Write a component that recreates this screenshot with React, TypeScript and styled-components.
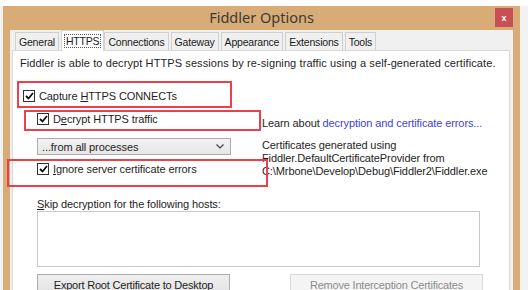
import React from 'react';
import styled, { createGlobalStyle, css } from 'styled-components';

const GlobalStyle = createGlobalStyle`
  html, body {
    margin: 0;
    padding: 0;
    background: #f2f2f2;
  }
  body {
    font-family: 'Liberation Sans', Arial, sans-serif;
  }
`;

const Page = styled.div`
  position: relative;
  width: 528px;
  height: 290px;
  overflow: hidden;
  background: #f2f2f2;
`;

const TopStrip = styled.div`
  height: 6px;
  background: #ffffff;
`;

const Frame = styled.div`
  margin-left: 3px;
  width: 517px;
  height: 300px;
  box-sizing: border-box;
  background: #d8ac77;
  padding: 0 7px;
  display: flex;
  flex-direction: column;
`;

const TitleBar = styled.div`
  height: 24px;
  display: grid;
  grid-template-columns: 1fr auto 1fr;
  align-items: start;
  margin: 0 -7px;
  padding: 0 7px;
`;

const Title = styled.div`
  grid-column: 2;
  font-family: 'Noto Sans', sans-serif;
  font-size: 14.5px;
  line-height: 23px;
  color: #3a3a3a;
`;

const CloseButton = styled.div`
  grid-column: 3;
  justify-self: end;
  margin-top: 2px;
  width: 18px;
  height: 19px;
  background: #c84f56;
  color: #ffffff;
  font-size: 9px;
  font-weight: bold;
  display: flex;
  align-items: center;
  justify-content: center;
`;

const Inner = styled.div`
  flex: 1;
  background: #f0f0f0;
  padding: 0 3px 0 2px;
  display: flex;
  flex-direction: column;
`;

const TabRow = styled.div`
  height: 20px;
  padding-left: 3px;
  display: flex;
  align-items: flex-end;
`;

const Tab = styled.div<{ $active?: boolean }>`
  box-sizing: border-box;
  height: 18px;
  margin-right: 2px;
  padding: 0 3px;
  border: 1px solid #cfcfcf;
  border-bottom: none;
  background: #f0f0f0;
  font-size: 10.5px;
  letter-spacing: -0.2px;
  color: #1a1a1a;
  display: flex;
  align-items: center;
  ${({ $active }) =>
    $active &&
    css`
      height: 21px;
      margin: 0 0 -1px 0;
      padding: 0 2px;
      background: #ffffff;
      position: relative;
      z-index: 1;
      border-color: #d4d4d4;
    `}
`;

const FocusText = styled.span`
  border: 1px dotted #555;
  padding: 0 1px;
  line-height: 12px;
`;

const Panel = styled.div`
  flex: 1;
  background: #ffffff;
  border: 1px solid #d9d9d9;
  padding: 5px 0 0 7px;
  font-size: 11px;
  letter-spacing: -0.1px;
  color: #1e1e1e;
`;

const Line = styled.div<{ $wide?: boolean }>`
  line-height: 14px;
  height: 14px;
  white-space: nowrap;
  ${({ $wide }) => $wide && 'letter-spacing: 0.1px;'}
`;

const CheckRow = styled.label<{ $indent: number; $top?: number }>`
  display: flex;
  align-items: center;
  height: 14px;
  margin-left: ${({ $indent }) => $indent}px;
  margin-top: ${({ $top = 0 }) => $top}px;
  white-space: nowrap;
`;

const Box = styled.span`
  width: 12px;
  height: 12px;
  flex-shrink: 0;
  box-sizing: border-box;
  border: 1px solid #333333;
  background: #ffffff;
  margin-right: 4px;
  display: flex;
  align-items: center;
  justify-content: center;
`;

const Grid = styled.div`
  display: grid;
  grid-template-columns: 242px 1fr;
  margin-top: 9px;
`;

const LeftCol = styled.div`
  padding-left: 17px;
  display: flex;
  flex-direction: column;
`;

const RightCol = styled.div`
  padding-top: 4px;
  display: flex;
  flex-direction: column;
`;

const Select = styled.div`
  box-sizing: border-box;
  width: 194px;
  height: 17px;
  margin-top: 12px;
  border: 1px solid #acacac;
  background: linear-gradient(#f2f2f2, #e6e6e6);
  padding: 0 6px 0 4px;
  display: flex;
  align-items: center;
  justify-content: space-between;
  white-space: nowrap;
`;

const Link = styled.span`
  color: #4141de;
`;

const CertText = styled.div`
  margin-top: 9px;
  line-height: 13px;
  white-space: nowrap;
`;

const Skip = styled.div`
  margin: 19px 0 0 17px;
  line-height: 14px;
  height: 14px;
`;

const HostsBox = styled.div`
  box-sizing: border-box;
  margin-left: 17px;
  width: 443px;
  height: 56px;
  border: 1px solid #c9c9c9;
  background: #ffffff;
`;

const ButtonRow = styled.div`
  margin: 7px 0 0 17px;
  display: flex;
  gap: 60px;
`;

const Button = styled.div<{ $disabled?: boolean }>`
  box-sizing: border-box;
  width: 193px;
  height: 22px;
  display: flex;
  align-items: center;
  justify-content: center;
  border: 1px solid #adadad;
  background: linear-gradient(#efefef, #e3e3e3);
  color: #1e1e1e;
  letter-spacing: -0.2px;
  ${({ $disabled }) =>
    $disabled &&
    css`
      border-color: #dadada;
      background: #f4f4f4;
      color: #8c8c8c;
    `}
`;

const Highlight = styled.div<{ $x: number; $y: number; $w: number; $h: number }>`
  position: absolute;
  left: ${({ $x }) => $x}px;
  top: ${({ $y }) => $y}px;
  width: ${({ $w }) => $w}px;
  height: ${({ $h }) => $h}px;
  box-sizing: border-box;
  border: 2px solid #e9424c;
  pointer-events: none;
`;

const Check = () => (
  <svg width="9" height="8" viewBox="0 0 9 8">
    <path d="M1 4 L3.5 6.5 L8 1" fill="none" stroke="#111" strokeWidth="1.8" />
  </svg>
);

const Chevron = () => (
  <svg width="8" height="5" viewBox="0 0 8 5">
    <path d="M0.5 0.5 L4 4 L7.5 0.5" fill="none" stroke="#444" strokeWidth="1.2" />
  </svg>
);

const tabs = ['General', 'HTTPS', 'Connections', 'Gateway', 'Appearance', 'Extensions', 'Tools'];

export default function App() {
  return (
    <>
      <GlobalStyle />
      <Page>
        <TopStrip />
        <Frame>
          <TitleBar>
            <Title>Fiddler Options</Title>
            <CloseButton>x</CloseButton>
          </TitleBar>
          <Inner>
            <TabRow>
              {tabs.map((t) =>
                t === 'HTTPS' ? (
                  <Tab key={t} $active>
                    <FocusText>{t}</FocusText>
                  </Tab>
                ) : (
                  <Tab key={t}>{t}</Tab>
                )
              )}
            </TabRow>
            <Panel>
              <Line $wide>
                Fiddler is able to decrypt HTTPS sessions by re-signing traffic using a self-generated certificate.
              </Line>
              <CheckRow $indent={3} $top={19}>
                <Box>
                  <Check />
                </Box>
                <span>
                  Capture <u>H</u>TTPS CONNECTs
                </span>
              </CheckRow>
              <Grid>
                <LeftCol>
                  <CheckRow $indent={0}>
                    <Box>
                      <Check />
                    </Box>
                    <span>
                      D<u>e</u>crypt HTTPS traffic
                    </span>
                  </CheckRow>
                  <Select>
                    <span>...from all processes</span>
                    <Chevron />
                  </Select>
                  <CheckRow $indent={0} $top={7}>
                    <Box>
                      <Check />
                    </Box>
                    <span>
                      <u>I</u>gnore server certificate errors
                    </span>
                  </CheckRow>
                </LeftCol>
                <RightCol>
                  <Line>
                    Learn about <Link>decryption and certificate errors...</Link>
                  </Line>
                  <CertText>
                    Certificates generated using
                    <br />
                    Fiddler.DefaultCertificateProvider from
                    <br />
                    C:\Mrbone\Develop\Debug\Fiddler2\Fiddler.exe
                  </CertText>
                </RightCol>
              </Grid>
              <Skip>
                <u>S</u>kip decryption for the following hosts:
              </Skip>
              <HostsBox />
              <ButtonRow>
                <Button>
                  <span>
                    E<u>x</u>port Root Certificate to Desktop
                  </span>
                </Button>
                <Button $disabled>
                  <span>
                    <u>R</u>emove Interception Certificates
                  </span>
                </Button>
              </ButtonRow>
            </Panel>
          </Inner>
        </Frame>
        <Highlight $x={17} $y={81} $w={215} $h={27} />
        <Highlight $x={24} $y={110} $w={237} $h={21} />
        <Highlight $x={7} $y={159} $w={261} $h={28} />
      </Page>
    </>
  );
}
